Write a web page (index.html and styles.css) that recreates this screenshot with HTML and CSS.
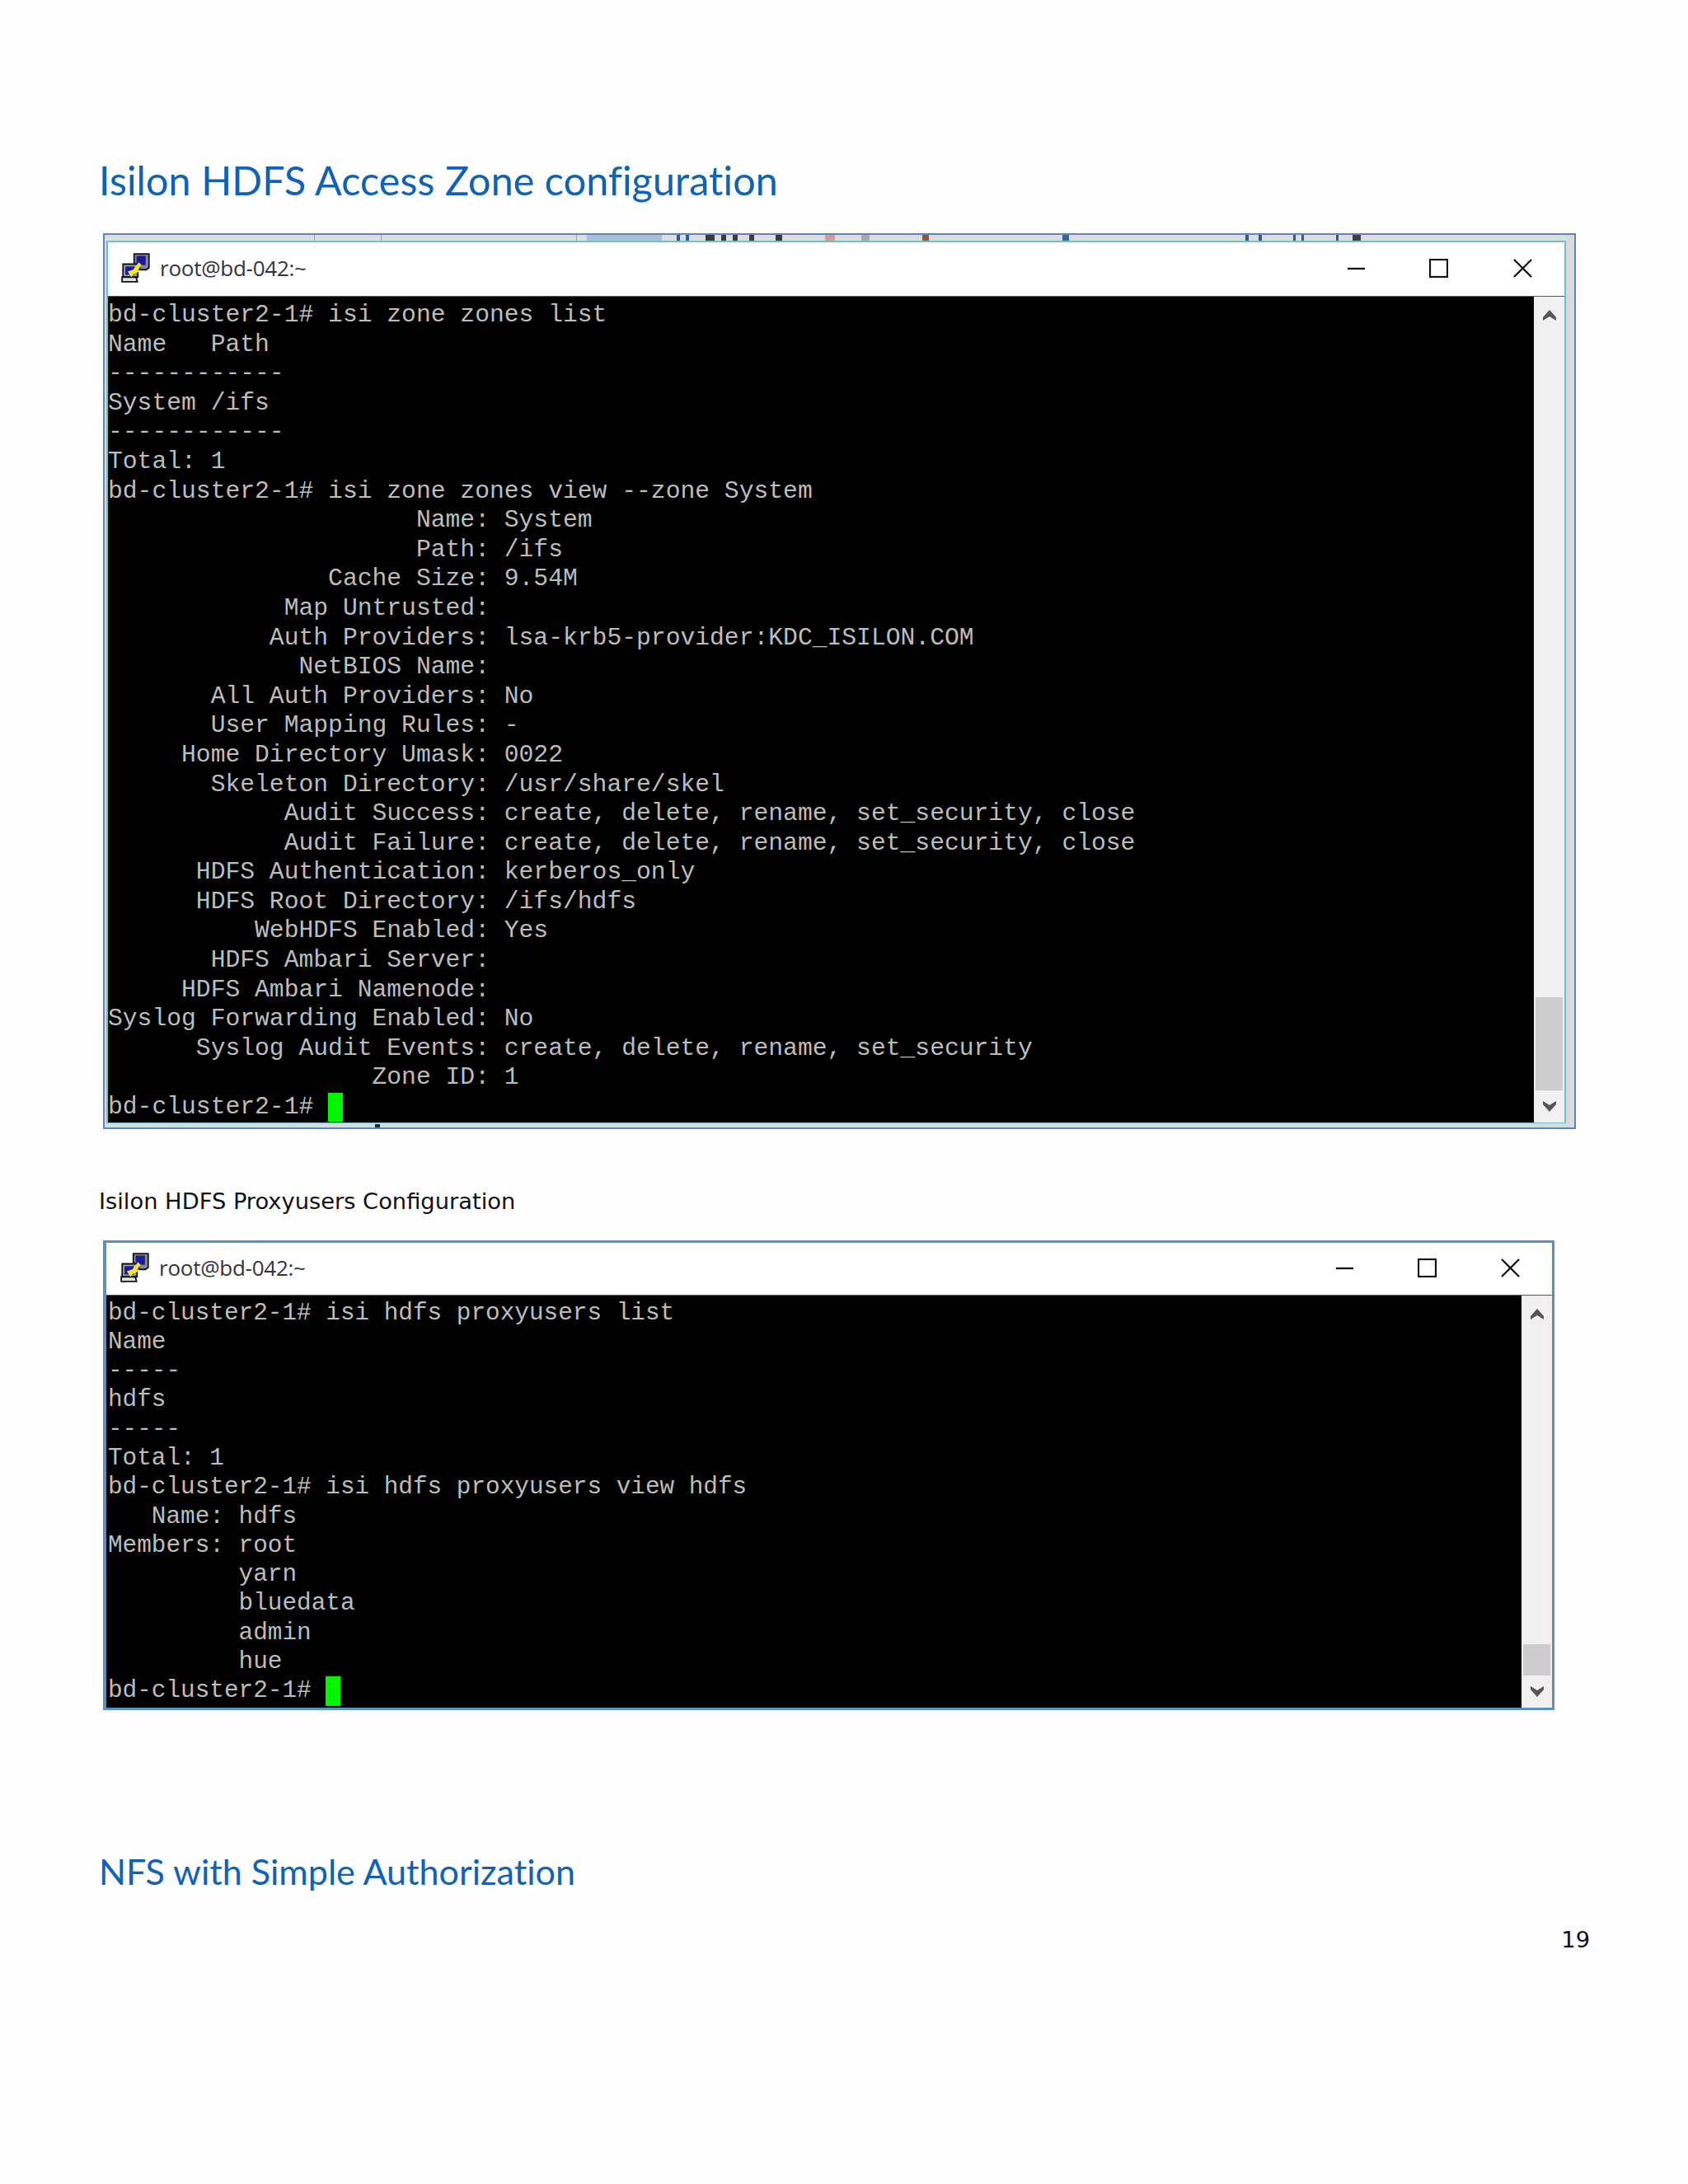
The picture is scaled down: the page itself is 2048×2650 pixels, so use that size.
FILE: index.html
```html
<!DOCTYPE html>
<html lang="en">
<head>
<meta charset="utf-8">
<title>Isilon HDFS Access Zone configuration</title>
<link rel="stylesheet" href="styles.css">
</head>
<body>
<main class="page">
  <h1 class="heading heading-first">Isilon HDFS Access Zone configuration</h1>

  <section class="shot shot-zone">
    <div class="behind"></div>
    <div class="window">
      <header class="titlebar">
        <svg class="putty" viewBox="0 0 32 32"><use href="#putty"/></svg>
        <span class="wintitle">root@bd-042:~</span>
        <div class="controls">
          <svg class="ctl" viewBox="0 0 24 24"><path d="M1 12.5h22" /></svg>
          <svg class="ctl" viewBox="0 0 24 24"><rect x="1" y="1" width="22" height="22"/></svg>
          <svg class="ctl" viewBox="0 0 24 24"><path d="M1 1l22 22M23 1L1 23"/></svg>
        </div>
      </header>
      <div class="body">
<pre class="term">bd-cluster2-1# isi zone zones list
Name   Path
------------
System /ifs
------------
Total: 1
bd-cluster2-1# isi zone zones view --zone System
                     Name: System
                     Path: /ifs
               Cache Size: 9.54M
            Map Untrusted:
           Auth Providers: lsa-krb5-provider:KDC_ISILON.COM
             NetBIOS Name:
       All Auth Providers: No
       User Mapping Rules: -
     Home Directory Umask: 0022
       Skeleton Directory: /usr/share/skel
            Audit Success: create, delete, rename, set_security, close
            Audit Failure: create, delete, rename, set_security, close
      HDFS Authentication: kerberos_only
      HDFS Root Directory: /ifs/hdfs
          WebHDFS Enabled: Yes
       HDFS Ambari Server:
     HDFS Ambari Namenode:
Syslog Forwarding Enabled: No
      Syslog Audit Events: create, delete, rename, set_security
                  Zone ID: 1
bd-cluster2-1# <span class="cursor"></span></pre>
        <aside class="scrollbar">
          <svg class="arrow arrow-up" viewBox="0 0 16 13"><path d="M8 0l8 9v4L8 8l-8 5V9z"/></svg>
          <div class="track"></div>
          <div class="thumb"></div>
          <svg class="arrow arrow-down" viewBox="0 0 16 13"><path d="M8 13l8-9V0L8 5 0 0v4z"/></svg>
        </aside>
      </div>
    </div>
    <div class="grip"></div>
  </section>

  <p class="caption">Isilon HDFS Proxyusers Configuration</p>

  <section class="shot shot-proxy">
    <div class="window">
      <header class="titlebar">
        <svg class="putty" viewBox="0 0 32 32"><use href="#putty"/></svg>
        <span class="wintitle">root@bd-042:~</span>
        <div class="controls">
          <svg class="ctl" viewBox="0 0 24 24"><path d="M1 12.5h22" /></svg>
          <svg class="ctl" viewBox="0 0 24 24"><rect x="1" y="1" width="22" height="22"/></svg>
          <svg class="ctl" viewBox="0 0 24 24"><path d="M1 1l22 22M23 1L1 23"/></svg>
        </div>
      </header>
      <div class="body">
<pre class="term">bd-cluster2-1# isi hdfs proxyusers list
Name
-----
hdfs
-----
Total: 1
bd-cluster2-1# isi hdfs proxyusers view hdfs
   Name: hdfs
Members: root
         yarn
         bluedata
         admin
         hue
bd-cluster2-1# <span class="cursor"></span></pre>
        <aside class="scrollbar">
          <svg class="arrow arrow-up" viewBox="0 0 16 13"><path d="M8 0l8 9v4L8 8l-8 5V9z"/></svg>
          <div class="track"></div>
          <div class="thumb"></div>
          <svg class="arrow arrow-down" viewBox="0 0 16 13"><path d="M8 13l8-9V0L8 5 0 0v4z"/></svg>
        </aside>
      </div>
    </div>
  </section>

  <h1 class="heading heading-nfs">NFS with Simple Authorization</h1>
  <p class="pagenum">19</p>
</main>

<svg class="defs" width="0" height="0" aria-hidden="true">
  <symbol id="putty" viewBox="0 0 32 32">
    <path d="M14 1h16v15l-3 2h-7v-3h-6z" fill="#8a8a8a" stroke="#111" stroke-width="1.6"/>
    <rect x="16.5" y="3" width="10" height="10" fill="#1a1a9e"/>
    <path d="M2 12h16v14H2z" fill="#a0a0a0" stroke="#111" stroke-width="1.6"/>
    <rect x="4.5" y="14.5" width="10" height="9" fill="#1a1a9e"/>
    <path d="M1 26h15l1.500 5H1z" fill="#e0e0e0" stroke="#111" stroke-width="1.6"/>
    <path d="M7 20l6-2 6-8 3 3-4 5 3 1-8 4-2 3z" fill="#f7e62b"/>
  </symbol>
</svg>
</body>
</html>
```

FILE: styles.css
```css
* { box-sizing: border-box; }
html, body { margin: 0; padding: 0; background: #fefefe; }
.page {
  width: 2048px;
  height: 2650px;
  padding: 188px 0 0 120px;
  display: flex;
  flex-direction: column;
  align-items: flex-start;
}
.defs { position: absolute; }
.heading {
  margin: 0;
  font: 400 48.6px/60px "Lato", "Liberation Sans", sans-serif;
  font-variant-ligatures: none;
  color: #0f62b6;
}
.heading-nfs { margin-top: 165px; font-size: 43.1px; }
.caption {
  margin: 70px 0 0;
  font: 400 27.3px/36px "DejaVu Sans", sans-serif;
  color: #111;
}
.pagenum {
  align-self: flex-end;
  margin: 36px 119px 0 0;
  font: 400 27.3px/36px "DejaVu Sans", sans-serif;
  color: #111;
}
.shot { margin: 35px 0 0 5px; display: flex; flex-direction: column; }
.shot-zone {
  position: relative;
  width: 1787px;
  height: 1087px;
  border: 2px solid #5b87bd;
  background: #d9dadb;
  padding: 0 10px 5px 2px;
}
.shot-proxy {
  width: 1761px;
  height: 570px;
  margin-top: 29px;
  border: 3px solid #5a91c4;
  border-left-width: 4px;
  background: #fff;
}
.grip {
  position: absolute;
  left: 328px;
  bottom: 0;
  width: 6px;
  height: 4px;
  background: #1c2a3a;
}
.behind {
  height: 7px;
  flex: none;
  background:
    linear-gradient(90deg,
      #dcdedf 0 252px, #9aa2a8 252px 253px,
      #dcdedf 253px 333px, #9aa2a8 333px 334px,
      #dcdedf 334px 570px, #9aa2a8 570px 571px,
      #dcdedf 571px 583px, #a9c0d4 583px 674px,
      #dcdedf 674px 692px, #2c5b8c 692px 696px,
      #dcdedf 696px 703px, #2c5b8c 703px 707px,
      #dcdedf 707px 727px, #40383a 727px 738px,
      #dcdedf 738px 746px, #40383a 746px 752px,
      #dcdedf 752px 760px, #40383a 760px 766px,
      #dcdedf 766px 780px, #40383a 780px 786px,
      #dcdedf 786px 812px, #40383a 812px 820px,
      #dcdedf 820px 872px, #d99a96 872px 884px,
      #dcdedf 884px 916px, #a8a8a8 916px 926px,
      #dcdedf 926px 990px, #8a5a3a 990px 998px,
      #dcdedf 998px 1160px, #2c6ca0 1160px 1168px,
      #dcdedf 1168px 1382px, #2c5b8c 1382px 1386px,
      #dcdedf 1386px 1398px, #2c5b8c 1398px 1402px,
      #dcdedf 1402px 1440px, #2c5b8c 1440px 1443px,
      #dcdedf 1443px 1450px, #2c5b8c 1450px 1453px,
      #dcdedf 1453px 1492px, #2c5b8c 1492px 1495px,
      #dcdedf 1495px 1512px, #3f3f3f 1512px 1522px,
      #dcdedf 1522px);
}
.window { flex: 1; min-height: 0; display: flex; flex-direction: column; background: #fff; }
.shot-zone .window { border: 2px solid #6fc0cf; border-bottom-width: 1px; }
.titlebar { height: 66px; flex: none; display: flex; align-items: center; padding: 0 0 3px 16px; background: #fff; border-bottom: 1px solid #555; }
.shot-proxy .titlebar { height: 64px; padding-left: 17px; }
.putty { width: 36px; height: 36px; flex: none; }
.wintitle {
  margin-left: 11px;
  font: 400 26px/30px "Open Sans", sans-serif;
  letter-spacing: -0.25px;
  color: #33333f;
}
.controls { margin-left: auto; display: flex; gap: 77px; padding-right: 39px; }
.ctl:last-child { margin-left: 2px; }
.shot-proxy .ctl:last-child { margin-left: 1px; }
.ctl { width: 23px; height: 23px; fill: none; stroke: #111; stroke-width: 2.4; }
.body { flex: 1; min-height: 0; display: flex; }
.term {
  flex: 1;
  margin: 0;
  padding: 5px 0 0 0;
  background: #000;
  color: #bdbdbd;
  font: 400 29.68px/35.6px "Liberation Mono", monospace;
  overflow: hidden;
}
.shot-proxy .term { font-size: 29.36px; line-height: 35.3px; padding: 3.5px 0 0 2px; }
.cursor {
  display: inline-block;
  width: 18px;
  height: 35.3px;
  background: #00f500;
  vertical-align: top;
}
.scrollbar {
  width: 37px;
  flex: none;
  background: #f0f0f0;
  display: flex;
  flex-direction: column;
  align-items: center;
}
.arrow { width: 16px; height: 13px; flex: none; fill: #555; }
.arrow-up { margin-top: 16px; }
.arrow-down { margin: 13px 0 13px; }
.track { flex: 1; }
.thumb { width: 33px; flex: none; background: #cdcdcd; }
.shot-zone .thumb { height: 113px; }
.shot-proxy .thumb { height: 38px; }
```
